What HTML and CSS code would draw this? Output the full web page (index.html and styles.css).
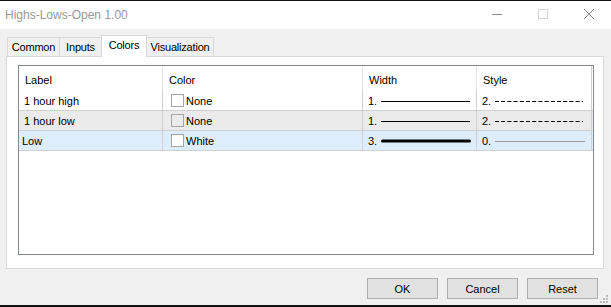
FILE: index.html
```html
<!DOCTYPE html>
<html lang="en">
<head>
<meta charset="UTF-8" />
<title>Highs-Lows-Open 1.00</title>
<link rel="stylesheet" href="styles.css">
</head>
<body>
<div class="edge"></div>

<!-- Title bar -->
<header class="titlebar">
  <span class="title">Highs-Lows-Open 1.00</span>
  <div class="wincontrols">
    <svg class="wbtn" width="12" height="12" viewBox="0 0 12 12"><line x1="1" y1="5.5" x2="11" y2="5.5" stroke="#8a8a8a" stroke-width="1"/></svg>
    <svg class="wbtn" width="12" height="12" viewBox="0 0 12 12"><rect x="1.5" y="0.5" width="9" height="9" fill="none" stroke="#d6d6d6" stroke-width="1"/></svg>
    <svg class="wbtn" width="12" height="12" viewBox="0 0 12 12"><path d="M1 0 L11 10 M11 0 L1 10" stroke="#8a8a8a" stroke-width="1" fill="none"/></svg>
  </div>
</header>

<!-- Tabs -->
<nav class="tabs">
  <div class="tab t-common">Common</div>
  <div class="tab t-inputs">Inputs</div>
  <div class="tab t-colors active">Colors</div>
  <div class="tab t-vis">Visualization</div>
</nav>

<!-- Panel -->
<section class="panel">
  <div class="list">
    <div class="row head">
      <div class="cell">Label</div>
      <div class="cell">Color</div>
      <div class="cell">Width</div>
      <div class="cell">Style</div>
      <div class="cell fill"></div>
    </div>

    <div class="row">
      <div class="cell">1 hour high</div>
      <div class="cell"><span class="swatch"></span>None</div>
      <div class="cell">1.<svg class="ln" width="90" height="6"><line x1="0" y1="3.5" x2="89" y2="3.5" stroke="#000" stroke-width="1"/></svg></div>
      <div class="cell">2.<svg class="ln" width="90" height="6"><line x1="0" y1="3.5" x2="88" y2="3.5" stroke="#000" stroke-width="1" stroke-dasharray="4 2.2"/></svg></div>
      <div class="cell fill"></div>
    </div>

    <div class="row alt">
      <div class="cell">1 hour low</div>
      <div class="cell"><span class="swatch"></span>None</div>
      <div class="cell">1.<svg class="ln" width="90" height="6"><line x1="0" y1="3.5" x2="89" y2="3.5" stroke="#000" stroke-width="1"/></svg></div>
      <div class="cell">2.<svg class="ln" width="90" height="6"><line x1="0" y1="3.5" x2="88" y2="3.5" stroke="#000" stroke-width="1" stroke-dasharray="4 2.2"/></svg></div>
      <div class="cell fill"></div>
    </div>

    <div class="row sel">
      <div class="cell first">Low</div>
      <div class="cell"><span class="swatch white"></span>White</div>
      <div class="cell">3.<svg class="ln" width="90" height="6"><line x1="1.5" y1="3" x2="88.5" y2="3" stroke="#000" stroke-width="3" stroke-linecap="round"/></svg></div>
      <div class="cell">0.<svg class="ln" width="92" height="6"><line x1="0" y1="3.5" x2="90" y2="3.5" stroke="#9a9a9a" stroke-width="1"/></svg></div>
      <div class="cell fill"></div>
    </div>
  </div>
</section>

<!-- Buttons -->
<footer class="buttons">
  <button class="btn">OK</button>
  <button class="btn">Cancel</button>
  <button class="btn">Reset</button>
  <svg class="grip" width="9" height="9" viewBox="0 0 9 9">
    <rect x="6" y="0" width="2" height="2" fill="#bdbdbd"/>
    <rect x="3" y="3" width="2" height="2" fill="#bdbdbd"/>
    <rect x="6" y="3" width="2" height="2" fill="#bdbdbd"/>
    <rect x="0" y="6" width="2" height="2" fill="#bdbdbd"/>
    <rect x="3" y="6" width="2" height="2" fill="#bdbdbd"/>
    <rect x="6" y="6" width="2" height="2" fill="#bdbdbd"/>
  </svg>
</footer>
<div class="edge bottom"></div>
</body>
</html>
```

FILE: styles.css
```css
:root {
  --face: #f0f0f0;
  --tab-line: #d9d9d9;
  --list-line: #828790;
  --grid: #d0d0d0;
  --text: #000;
}
* { box-sizing: border-box; margin: 0; }
html, body { width: 611px; height: 307px; overflow: hidden; }
body { background: var(--face); font-family: "Liberation Sans", Arial, sans-serif; font-size: 11px; color: var(--text); display: flex; flex-direction: column; position: relative; }

.edge { height: 1px; background: #111; }
.edge.bottom { height: 2px; margin-top: auto; }

/* --------------------  Title bar  --------------------- */
.titlebar { height: 28px; background: #fff; display: flex; align-items: center; padding-left: 5px; }
.title { color: #999; font-size: 12px; }
.wincontrols { margin-left: auto; display: flex; gap: 34px; padding-right: 16px; }
.wbtn { display: block; }

/* --------------------  Tabs  -------------------------- */
.tabs { display: flex; align-items: flex-end; padding-left: 7px; margin-top: 6px; height: 21px; position: relative; z-index: 1; }
.tab { height: 19px; border: 1px solid var(--tab-line); border-bottom: none; border-left: none; display: flex; align-items: center; justify-content: center; background: var(--face); letter-spacing: -0.2px; }
.tab:first-child { border-left: 1px solid var(--tab-line); }
.t-common { width: 53px; }
.t-inputs { width: 42px; }
.t-colors { width: 46px; }
.t-vis { width: 67px; }
.tab.active { height: 22px; background: #fff; border-left: 1px solid var(--tab-line); margin-bottom: -1px; padding-bottom: 3px; margin-left: -1px; }

/* --------------------  Panel  ------------------------- */
.panel { margin: 0 7px 0 6px; height: 213px; background: #fff; border: 1px solid var(--tab-line); padding: 8px 9px 13px 11px; }
.list { height: 100%; border: 1px solid var(--list-line); }

.row { display: grid; grid-template-columns: 143px 200px 114px 115px 1fr; height: 20px; border-bottom: 1px solid var(--grid); }
.row.head { height: 25px; border-bottom: none; }
.row.alt { background: #ebebeb; }
.row.sel { background: #deedfb; }

.cell { display: flex; align-items: center; padding-left: 5px; white-space: nowrap; border-left: 1px solid var(--grid); }
.cell:first-child { border-left: none; }
.cell.first { padding-left: 3px; }
.cell.fill { padding: 0; }
.head .cell { padding-left: 6px; padding-top: 2px; border-left-color: #e3e3e3; }
.head .cell.fill { border-left-color: #cfcfcf; }

.swatch { width: 13px; height: 13px; border: 1px solid #a5a5a5; margin: 0 2px 0 3px; }
.swatch.white { background: #fff; }
.ln { display: block; margin-left: 4px; }

/* --------------------  Buttons  ----------------------- */
.buttons { display: flex; justify-content: flex-end; gap: 9px; padding: 9px 13px 0 0; }
.btn { width: 71px; height: 21px; background: #e1e1e1; border: 1px solid #adadad; font: inherit; font-size: 11px; color: #000; padding: 0; }
.grip { position: absolute; right: 2px; bottom: 3px; }
```
